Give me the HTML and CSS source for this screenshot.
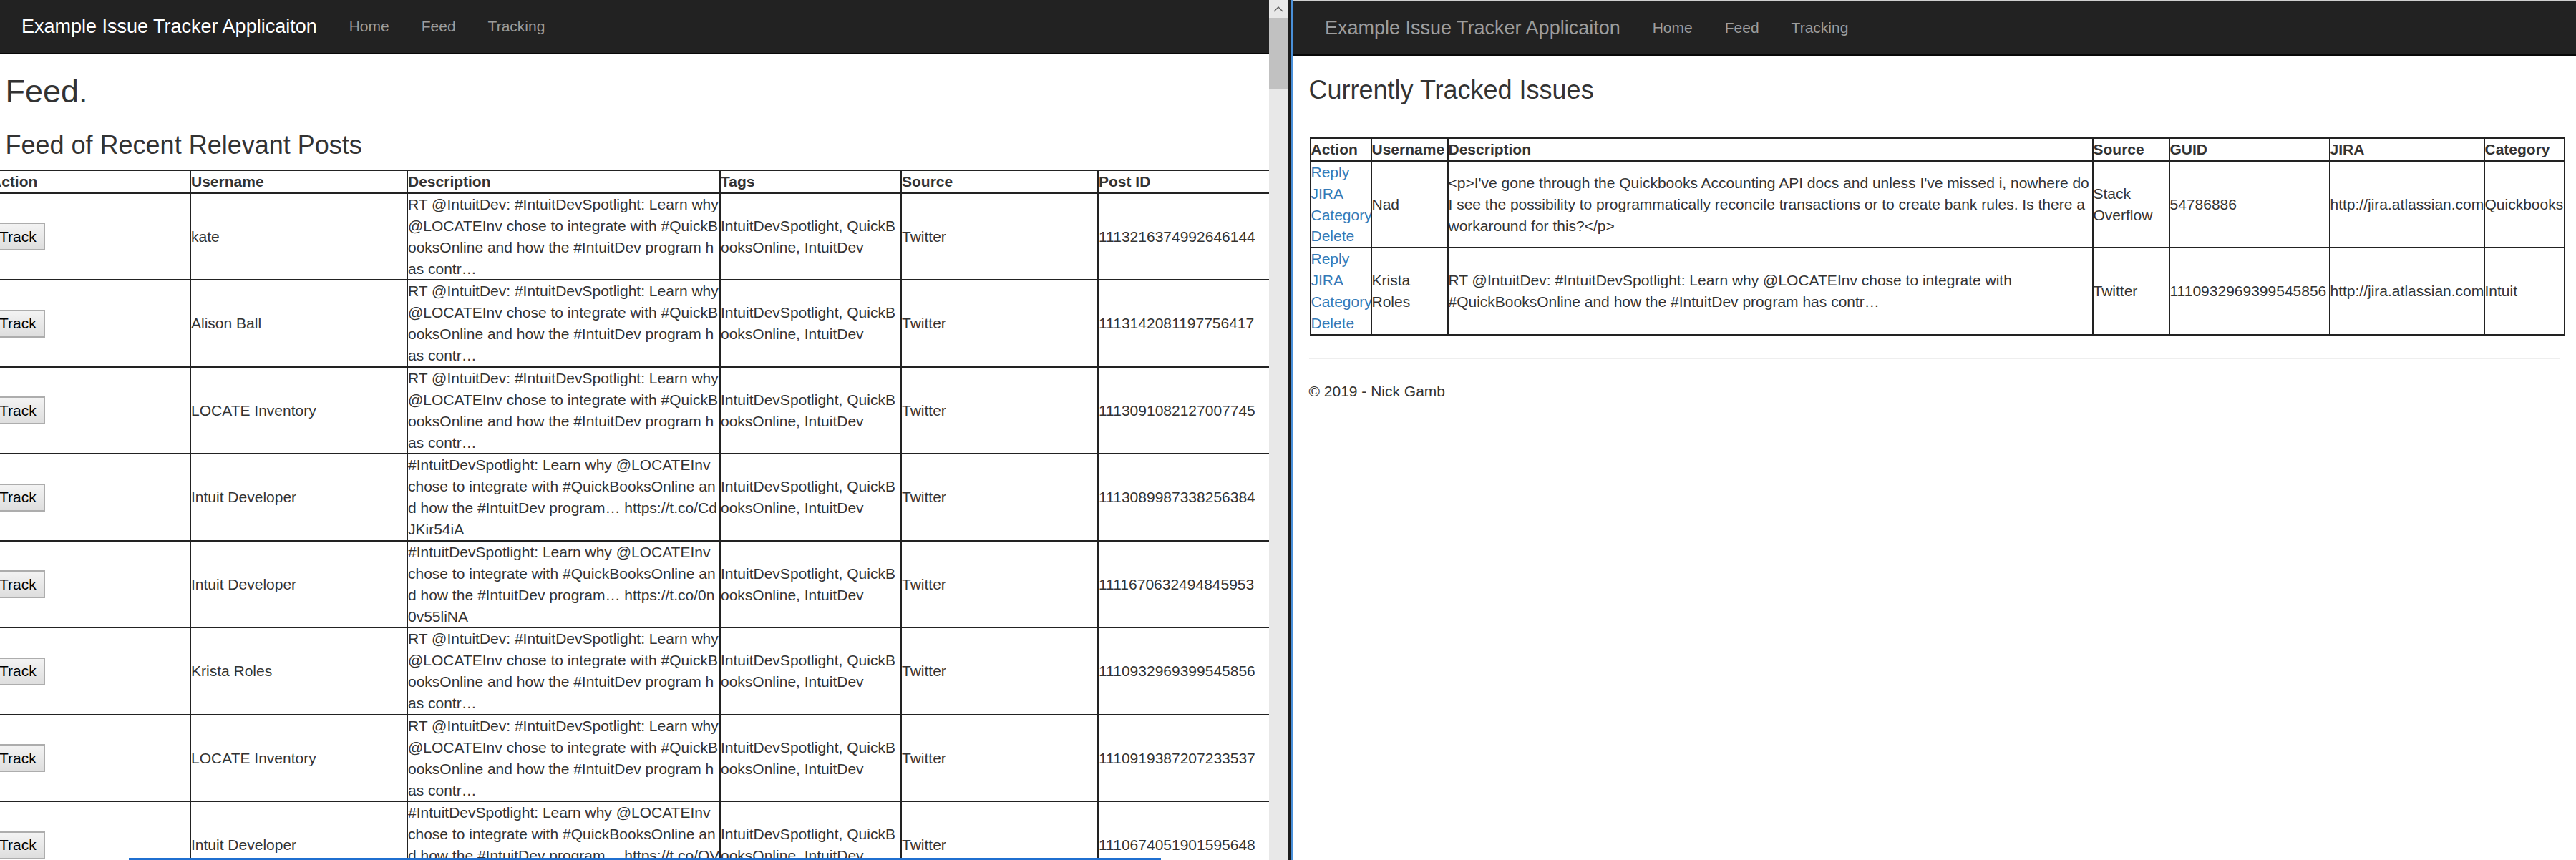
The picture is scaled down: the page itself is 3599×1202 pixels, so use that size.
FILE: index.html
```html
<!DOCTYPE html>
<html lang="en">
<head>
<meta charset="utf-8">
<title>Example Issue Tracker Applicaiton</title>
<link rel="stylesheet" href="styles.css">
</head>
<body>
<div class="screen">
  <div class="win win-left">
    <nav class="navbar nav-left">
      <a class="brand" href="#">Example Issue Tracker Applicaiton</a>
      <a class="navlink" href="#">Home</a>
      <a class="navlink" href="#">Feed</a>
      <a class="navlink" href="#">Tracking</a>
    </nav>
    <main class="page page-left">
      <h2 class="title">Feed.</h2>
      <h3 class="subtitle">Feed of Recent Relevant Posts</h3>
      <table class="grid feed">
        <colgroup>
          <col class="f-action"><col class="f-user"><col class="f-desc"><col class="f-tags"><col class="f-source"><col class="f-id">
        </colgroup>
        <thead>
          <tr><th>Action</th><th>Username</th><th>Description</th><th>Tags</th><th>Source</th><th>Post ID</th></tr>
        </thead>
        <tbody>
          <tr>
            <td><button class="track">Track</button></td>
            <td>kate</td>
            <td class="lines">RT @IntuitDev: #IntuitDevSpotlight: Learn why<br>@LOCATEInv chose to integrate with #QuickB<br>ooksOnline and how the #IntuitDev program h<br>as contr…</td>
            <td class="lines">IntuitDevSpotlight, QuickB<br>ooksOnline, IntuitDev</td>
            <td>Twitter</td>
            <td class="lines">1113216374992646144</td>
          </tr>
          <tr>
            <td><button class="track">Track</button></td>
            <td>Alison Ball</td>
            <td class="lines">RT @IntuitDev: #IntuitDevSpotlight: Learn why<br>@LOCATEInv chose to integrate with #QuickB<br>ooksOnline and how the #IntuitDev program h<br>as contr…</td>
            <td class="lines">IntuitDevSpotlight, QuickB<br>ooksOnline, IntuitDev</td>
            <td>Twitter</td>
            <td class="lines">1113142081197756417</td>
          </tr>
          <tr>
            <td><button class="track">Track</button></td>
            <td>LOCATE Inventory</td>
            <td class="lines">RT @IntuitDev: #IntuitDevSpotlight: Learn why<br>@LOCATEInv chose to integrate with #QuickB<br>ooksOnline and how the #IntuitDev program h<br>as contr…</td>
            <td class="lines">IntuitDevSpotlight, QuickB<br>ooksOnline, IntuitDev</td>
            <td>Twitter</td>
            <td class="lines">1113091082127007745</td>
          </tr>
          <tr>
            <td><button class="track">Track</button></td>
            <td>Intuit Developer</td>
            <td class="lines">#IntuitDevSpotlight: Learn why @LOCATEInv<br>chose to integrate with #QuickBooksOnline an<br>d how the #IntuitDev program… https://t.co/Cd<br>JKir54iA</td>
            <td class="lines">IntuitDevSpotlight, QuickB<br>ooksOnline, IntuitDev</td>
            <td>Twitter</td>
            <td class="lines">1113089987338256384</td>
          </tr>
          <tr>
            <td><button class="track">Track</button></td>
            <td>Intuit Developer</td>
            <td class="lines">#IntuitDevSpotlight: Learn why @LOCATEInv<br>chose to integrate with #QuickBooksOnline an<br>d how the #IntuitDev program… https://t.co/0n<br>0v55liNA</td>
            <td class="lines">IntuitDevSpotlight, QuickB<br>ooksOnline, IntuitDev</td>
            <td>Twitter</td>
            <td class="lines">1111670632494845953</td>
          </tr>
          <tr>
            <td><button class="track">Track</button></td>
            <td>Krista Roles</td>
            <td class="lines">RT @IntuitDev: #IntuitDevSpotlight: Learn why<br>@LOCATEInv chose to integrate with #QuickB<br>ooksOnline and how the #IntuitDev program h<br>as contr…</td>
            <td class="lines">IntuitDevSpotlight, QuickB<br>ooksOnline, IntuitDev</td>
            <td>Twitter</td>
            <td class="lines">1110932969399545856</td>
          </tr>
          <tr>
            <td><button class="track">Track</button></td>
            <td>LOCATE Inventory</td>
            <td class="lines">RT @IntuitDev: #IntuitDevSpotlight: Learn why<br>@LOCATEInv chose to integrate with #QuickB<br>ooksOnline and how the #IntuitDev program h<br>as contr…</td>
            <td class="lines">IntuitDevSpotlight, QuickB<br>ooksOnline, IntuitDev</td>
            <td>Twitter</td>
            <td class="lines">1110919387207233537</td>
          </tr>
          <tr>
            <td><button class="track">Track</button></td>
            <td>Intuit Developer</td>
            <td class="lines">#IntuitDevSpotlight: Learn why @LOCATEInv<br>chose to integrate with #QuickBooksOnline an<br>d how the #IntuitDev program… https://t.co/OV<br>x3LbQe7K</td>
            <td class="lines">IntuitDevSpotlight, QuickB<br>ooksOnline, IntuitDev</td>
            <td>Twitter</td>
            <td class="lines">1110674051901595648</td>
          </tr>
        </tbody>
      </table>
    </main>
    <div class="taskline"></div>
  </div>

  <div class="scrollbar">
    <div class="sb-arrow">
      <svg width="14" height="9" viewBox="0 0 14 9"><polyline points="1,8 7,2 13,8" fill="none" stroke="#606060" stroke-width="1.4"/></svg>
    </div>
    <div class="sb-thumb"></div>
    <div class="sb-track"></div>
  </div>

  <div class="divider"></div>

  <div class="win win-right">
    <nav class="navbar nav-right">
      <a class="brand" href="#">Example Issue Tracker Applicaiton</a>
      <a class="navlink" href="#">Home</a>
      <a class="navlink" href="#">Feed</a>
      <a class="navlink" href="#">Tracking</a>
    </nav>
    <main class="page page-right">
      <h3 class="subtitle tracked">Currently Tracked Issues</h3>
      <table class="grid issues">
        <colgroup>
          <col class="i-action"><col class="i-user"><col class="i-desc"><col class="i-source"><col class="i-guid"><col class="i-jira"><col class="i-cat">
        </colgroup>
        <thead>
          <tr><th>Action</th><th>Username</th><th>Description</th><th>Source</th><th>GUID</th><th>JIRA</th><th>Category</th></tr>
        </thead>
        <tbody>
          <tr>
            <td class="actions"><a href="#">Reply</a><a href="#">JIRA</a><a href="#">Category</a><a href="#">Delete</a></td>
            <td>Nad</td>
            <td class="lines">&lt;p&gt;I've gone through the Quickbooks Accounting API docs and unless I've missed i, nowhere do<br>I see the possibility to programmatically reconcile transactions or to create bank rules. Is there a<br>workaround for this?&lt;/p&gt;</td>
            <td>Stack Overflow</td>
            <td class="lines">54786886</td>
            <td class="lines">http://jira.atlassian.com</td>
            <td class="lines">Quickbooks</td>
          </tr>
          <tr>
            <td class="actions"><a href="#">Reply</a><a href="#">JIRA</a><a href="#">Category</a><a href="#">Delete</a></td>
            <td>Krista Roles</td>
            <td class="lines">RT @IntuitDev: #IntuitDevSpotlight: Learn why @LOCATEInv chose to integrate with<br>#QuickBooksOnline and how the #IntuitDev program has contr…</td>
            <td>Twitter</td>
            <td class="lines">1110932969399545856</td>
            <td class="lines">http://jira.atlassian.com</td>
            <td class="lines">Intuit</td>
          </tr>
        </tbody>
      </table>
      <hr class="rule">
      <footer class="foot">
        <p>© 2019 - Nick Gamb</p>
      </footer>
    </main>
  </div>
</div>
</body>
</html>
```

FILE: styles.css
```css
html, body {
  margin: 0;
  padding: 0;
  background: #ffffff;
}

body {
  font-family: "Liberation Sans", Arial, Helvetica, sans-serif;
  font-size: 21px;
  line-height: 30px;
  color: #333333;
}

.screen {
  display: flex;
  width: 3599px;
  height: 1202px;
  overflow: hidden;
}

.win {
  position: relative;
  height: 1202px;
  overflow: hidden;
  background: #ffffff;
}

.win-left {
  width: 1773px;
  flex: 0 0 1773px;
}

.win-right {
  flex: 1 1 auto;
  border-top: 1px solid #cfcfcf;
  box-sizing: border-box;
}

/* navbar */
.navbar {
  display: flex;
  align-items: flex-start;
  background: #222222;
  border-bottom: 2px solid #080808;
}

.nav-left { height: 74px; }
.nav-right { height: 75px; }

.brand {
  font-size: 27px;
  line-height: 30px;
  padding: 22.5px 22.5px 0;
  color: #9d9d9d;
  text-decoration: none;
  white-space: nowrap;
}

.navlink {
  font-size: 21px;
  line-height: 30px;
  padding: 22.5px 22.5px 0;
  color: #9d9d9d;
  text-decoration: none;
  white-space: nowrap;
}

.nav-left .brand {
  margin-left: 7.5px;
  padding-top: 21.5px;
  color: #ffffff;
}

.nav-left .navlink { padding-top: 21.5px; }

.nav-right .brand { margin-left: 22.5px; }

/* page */
.page-left {
  padding-left: 7.5px;
}

.page-right {
  padding: 0 22.5px;
}

.title {
  font-size: 45px;
  line-height: 49.5px;
  font-weight: 500;
  margin: 27px 0 0;
}

.subtitle {
  font-size: 36px;
  line-height: 39.6px;
  font-weight: 500;
  margin: 30px 0 15px;
}

.subtitle.tracked {
  margin: 28px 0 46.4px;
}

/* tables */
.grid {
  border-collapse: collapse;
  table-layout: fixed;
}

.grid th,
.grid td {
  border: 2px solid #222222;
  padding: 0;
  line-height: 29.875px;
  vertical-align: middle;
  text-align: left;
  overflow: hidden;
}

.grid th {
  font-weight: bold;
  white-space: nowrap;
}

.lines { white-space: nowrap; }

.feed {
  width: 1848px;
  margin-left: -22.5px;
}

.f-action { width: 280px; }
.f-user { width: 303px; }
.f-desc { width: 437px; }
.f-tags { width: 253px; }
.f-source { width: 275px; }
.f-id { width: 300px; }

.issues {
  width: 1752px;
  margin-left: 1px;
}

.i-action { width: 85px; }
.i-user { width: 107px; }
.i-desc { width: 901px; }
.i-source { width: 107px; }
.i-guid { width: 224px; }
.i-jira { width: 216px; }
.i-cat { width: 112px; }

.actions a {
  display: block;
  color: #337ab7;
  text-decoration: none;
  white-space: nowrap;
}

.track {
  font-family: inherit;
  font-size: 21px;
  line-height: 30px;
  color: #000000;
  margin: 0;
  padding: 2.5px 10px;
  border: 2px solid #adadad;
  border-radius: 0;
  background: linear-gradient(#f3f3f3, #dedede);
}

/* footer */
.rule {
  margin: 31px 0 30px;
  border: 0;
  border-top: 2px solid #eeeeee;
  height: 0;
}

.foot p {
  margin: 0 0 15px;
}

/* scrollbar of the left window */
.scrollbar {
  flex: 0 0 26px;
  display: flex;
  flex-direction: column;
  background: #e8e8e8;
}

.sb-arrow {
  height: 25px;
  display: flex;
  align-items: center;
  justify-content: center;
}

.sb-thumb {
  height: 100px;
  background: #c1c1c1;
}

.sb-track {
  flex: 1 1 auto;
}

.divider {
  flex: 0 0 7px;
  box-sizing: border-box;
  background: #1c1c1c;
  border-right: 2px solid #4a90d9;
}

.taskline {
  position: absolute;
  left: 180px;
  bottom: 0;
  width: 1442px;
  height: 3px;
  background: #1f6fd0;
}
```
